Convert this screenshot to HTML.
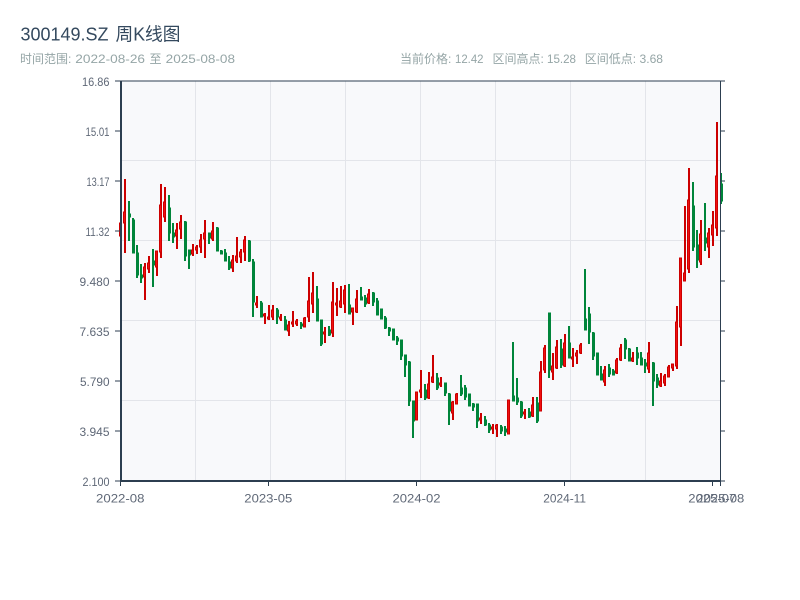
<!DOCTYPE html>
<html><head><meta charset="utf-8"><style>
html,body{margin:0;padding:0;background:#fff}
svg{display:block}
text{font-family:"Liberation Sans","WenQuanYi Zen Hei",sans-serif}
.cjk{font-family:"WenQuanYi Zen Hei","Liberation Sans",sans-serif}
.gr rect{fill:#00853a;stroke:#00853a;stroke-width:1;width:2px}
.rd rect{fill:#f01010;stroke:#cc0000;stroke-width:1;width:2px}
.yl text{font-size:12px;fill:#5f6877}
.xl text{font-size:12px;fill:#5f6877}
.sub text{font-size:12px;fill:#95a5a6}
</style></head><body>
<svg width="800" height="600" viewBox="0 0 800 600" xmlns="http://www.w3.org/2000/svg">
<rect x="120" y="81" width="600" height="400" fill="#f8f9fb"/>
<path d="M120 160.5H720M120 240.5H720M120 320.5H720M120 400.5H720M195.5 81V481M270.5 81V481M345.5 81V481M420.5 81V481M495.5 81V481M570.5 81V481M645.5 81V481" stroke="#e3e5ea" stroke-width="1" fill="none"/>

<path fill="none" stroke="#cc0000" stroke-width="2" d="M121 223V236M125 179V253M145 263V300M149 256V273M157 251V276M161 184V258M165 187V222M177 223V249M181 215V239M193 244V256M197 245V254M201 234V253M205 220V258M213 222V241M233 255V272M237 237V263M241 249V263M245 236V261M257 296V308M265 313V324M269 305V320M273 305V320M281 314V321M289 321V336M293 311V327M297 319V326M305 317V327M309 277V322M313 272V313M325 327V343M333 282V337M337 288V316M341 286V308M345 285V313M353 308V325M357 290V313M369 289V304M417 392V420M421 370V398M429 372V399M433 355V383M441 377V387M453 401V420M457 393V404M481 413V424M493 424V434M497 424V437M509 400V434M525 409V419M533 397V417M541 361V411M545 345V373M553 353V380M557 340V369M565 334V367M573 348V367M577 350V364M581 343V354M605 366V386M617 358V374M621 344V361M633 352V362M649 342V373M661 373V387M665 374V386M669 365V377M673 364V371M677 306V369M681 258V346M685 206V281M689 168V273M701 220V265M709 228V258M713 211V246M717 122V236"/>
<path fill="none" stroke="#00853a" stroke-width="2" d="M129 201V241M133 218V253M137 245V278M141 264V283M153 249V287M169 195V241M173 223V243M185 221V261M189 250V269M209 233V244M217 227V251M221 250V254M225 249V261M229 256V270M249 240V262M253 259V317M261 301V317M277 308V324M285 316V330M301 322V329M317 286V321M321 320V346M329 326V336M349 284V314M361 287V300M365 295V307M373 292V306M377 298V315M381 309V319M385 316V329M389 327V336M393 329V340M397 336V345M401 340V360M405 355V377M409 361V406M413 401V438M425 384V400M437 373V390M445 383V396M449 393V425M461 375V396M465 385V400M469 394V406M473 403V411M477 404V428M485 416V426M489 423V433M501 425V434M505 426V436M513 342V401M517 378V405M521 401V418M529 408V418M537 397V423M549 313V378M561 339V368M569 326V358M585 269V330M589 307V344M593 332V360M597 353V375M601 366V380M609 364V377M613 369V375M625 338V359M629 348V361M637 347V365M641 352V365M645 359V373M653 362V406M657 374V388M693 182V251M697 230V268M705 203V251M721 173V204"/>

<g class="gr">
<rect x="128.5" y="214" height="3"/><rect x="132.5" y="220" height="33"/><rect x="136.5" y="253" height="22"/><rect x="140.5" y="275" height="3"/><rect x="152.5" y="261" height="4"/><rect x="168.5" y="208" height="25"/><rect x="172.5" y="233" height="4"/><rect x="184.5" y="222" height="34"/><rect x="188.5" y="250" height="5"/><rect x="208.5" y="233" height="5"/><rect x="216.5" y="228" height="23"/><rect x="220.5" y="251" height="3"/><rect x="224.5" y="253" height="8"/><rect x="228.5" y="262" height="6"/><rect x="248.5" y="241" height="20"/><rect x="252.5" y="262" height="40"/><rect x="260.5" y="303" height="14"/><rect x="276.5" y="310" height="7"/><rect x="284.5" y="320" height="10"/><rect x="300.5" y="324" height="2"/><rect x="316.5" y="299" height="22"/><rect x="320.5" y="320" height="24"/><rect x="328.5" y="330" height="5"/><rect x="348.5" y="305" height="9"/><rect x="360.5" y="297" height="3"/><rect x="364.5" y="298" height="6"/><rect x="372.5" y="293" height="9"/><rect x="376.5" y="301" height="14"/><rect x="380.5" y="309" height="10"/><rect x="384.5" y="318" height="10"/><rect x="388.5" y="328" height="3"/><rect x="392.5" y="329" height="11"/><rect x="396.5" y="338" height="3"/><rect x="400.5" y="340" height="16"/><rect x="404.5" y="355" height="10"/><rect x="408.5" y="362" height="39"/><rect x="412.5" y="401" height="20"/><rect x="424.5" y="390" height="8"/><rect x="436.5" y="378" height="10"/><rect x="444.5" y="383" height="10"/><rect x="448.5" y="394" height="17"/><rect x="460.5" y="388" height="6"/><rect x="464.5" y="388" height="9"/><rect x="468.5" y="394" height="12"/><rect x="472.5" y="404" height="3"/><rect x="476.5" y="404" height="17"/><rect x="484.5" y="420" height="5"/><rect x="488.5" y="425" height="5"/><rect x="500.5" y="427" height="4"/><rect x="504.5" y="429" height="3"/><rect x="512.5" y="396" height="5"/><rect x="516.5" y="398" height="4"/><rect x="520.5" y="402" height="14"/><rect x="528.5" y="412" height="5"/><rect x="536.5" y="403" height="18"/><rect x="548.5" y="313" height="57"/><rect x="560.5" y="349" height="16"/><rect x="568.5" y="343" height="15"/><rect x="584.5" y="319" height="11"/><rect x="588.5" y="314" height="18"/><rect x="592.5" y="333" height="23"/><rect x="596.5" y="353" height="22"/><rect x="600.5" y="374" height="6"/><rect x="608.5" y="368" height="6"/><rect x="612.5" y="371" height="4"/><rect x="624.5" y="340" height="9"/><rect x="628.5" y="349" height="12"/><rect x="636.5" y="353" height="5"/><rect x="640.5" y="358" height="7"/><rect x="644.5" y="363" height="3"/><rect x="652.5" y="363" height="18"/><rect x="656.5" y="378" height="7"/><rect x="692.5" y="206" height="41"/><rect x="696.5" y="245" height="15"/><rect x="704.5" y="238" height="5"/><rect x="720.5" y="184" height="17"/>
</g>
<g class="rd">
<rect x="119.5" y="223" height="13"/><rect x="123.5" y="212" height="11"/><rect x="143.5" y="267" height="10"/><rect x="147.5" y="263" height="6"/><rect x="155.5" y="251" height="16"/><rect x="159.5" y="205" height="47"/><rect x="163.5" y="202" height="15"/><rect x="175.5" y="230" height="6"/><rect x="179.5" y="222" height="7"/><rect x="191.5" y="250" height="4"/><rect x="195.5" y="247" height="3"/><rect x="199.5" y="240" height="7"/><rect x="203.5" y="233" height="6"/><rect x="211.5" y="231" height="8"/><rect x="231.5" y="260" height="8"/><rect x="235.5" y="256" height="5"/><rect x="239.5" y="252" height="5"/><rect x="243.5" y="240" height="12"/><rect x="255.5" y="303" height="2"/><rect x="263.5" y="314" height="2"/><rect x="267.5" y="317" height="2"/><rect x="271.5" y="310" height="7"/><rect x="279.5" y="317" height="2"/><rect x="287.5" y="325" height="6"/><rect x="291.5" y="322" height="2"/><rect x="295.5" y="321" height="3"/><rect x="303.5" y="318" height="9"/><rect x="307.5" y="301" height="16"/><rect x="311.5" y="293" height="11"/><rect x="323.5" y="332" height="2"/><rect x="331.5" y="302" height="31"/><rect x="335.5" y="303" height="2"/><rect x="339.5" y="301" height="6"/><rect x="343.5" y="290" height="14"/><rect x="351.5" y="308" height="4"/><rect x="355.5" y="299" height="13"/><rect x="367.5" y="294" height="9"/><rect x="415.5" y="392" height="28"/><rect x="419.5" y="390" height="2"/><rect x="427.5" y="384" height="14"/><rect x="431.5" y="377" height="5"/><rect x="439.5" y="383" height="2"/><rect x="451.5" y="402" height="11"/><rect x="455.5" y="394" height="10"/><rect x="479.5" y="418" height="2"/><rect x="491.5" y="427" height="2"/><rect x="495.5" y="425" height="4"/><rect x="507.5" y="400" height="34"/><rect x="523.5" y="412" height="2"/><rect x="531.5" y="405" height="11"/><rect x="539.5" y="372" height="39"/><rect x="543.5" y="348" height="22"/><rect x="551.5" y="366" height="6"/><rect x="555.5" y="347" height="21"/><rect x="563.5" y="343" height="23"/><rect x="571.5" y="357" height="2"/><rect x="575.5" y="353" height="3"/><rect x="579.5" y="345" height="8"/><rect x="603.5" y="370" height="12"/><rect x="615.5" y="360" height="13"/><rect x="619.5" y="348" height="12"/><rect x="631.5" y="358" height="3"/><rect x="647.5" y="353" height="16"/><rect x="659.5" y="381" height="5"/><rect x="663.5" y="376" height="7"/><rect x="667.5" y="367" height="10"/><rect x="671.5" y="364" height="4"/><rect x="675.5" y="322" height="44"/><rect x="679.5" y="258" height="69"/><rect x="683.5" y="273" height="8"/><rect x="687.5" y="200" height="69"/><rect x="699.5" y="234" height="28"/><rect x="707.5" y="233" height="14"/><rect x="711.5" y="225" height="10"/><rect x="715.5" y="176" height="52"/>
</g>

<path fill="none" stroke="#2c3e50" stroke-width="1" d="M115 81H725M115 131H120M115 181H120M115 231H120M115 281H120M115 331H120M115 381H120M115 431H120M720.500 81V481M720 131H725M720 181H725M720 231H725M720 281H725M720 331H725M720 381H725M720 431H725M115 481H120M720 481H725M120.500 481V486M268.500 481V486M416.500 481V486M564.500 481V486M712.500 481V486M720.500 481V486"/>
<path fill="none" stroke="#2c3e50" stroke-width="2" d="M121 81V482M120 481H721"/>

<g class="yl">
<text x="82" y="86" textLength="27.500" lengthAdjust="spacingAndGlyphs">16.86</text>
<text x="85.500" y="136" textLength="24" lengthAdjust="spacingAndGlyphs">15.01</text>
<text x="86.500" y="186" textLength="23" lengthAdjust="spacingAndGlyphs">13.17</text>
<text x="85.500" y="236" textLength="24" lengthAdjust="spacingAndGlyphs">11.32</text>
<text x="79.500" y="286" textLength="30" lengthAdjust="spacingAndGlyphs">9.480</text>
<text x="79.500" y="336" textLength="30" lengthAdjust="spacingAndGlyphs">7.635</text>
<text x="80" y="386" textLength="29.500" lengthAdjust="spacingAndGlyphs">5.790</text>
<text x="79.500" y="436" textLength="30" lengthAdjust="spacingAndGlyphs">3.945</text>
<text x="82.500" y="486" textLength="27" lengthAdjust="spacingAndGlyphs">2.100</text>
</g>
<g class="xl">
<text x="96" y="502.500" textLength="48.500" lengthAdjust="spacingAndGlyphs">2022-08</text>
<text x="244.300" y="502.500" textLength="48" lengthAdjust="spacingAndGlyphs">2023-05</text>
<text x="392.500" y="502.500" textLength="48" lengthAdjust="spacingAndGlyphs">2024-02</text>
<text x="543.300" y="502.500" textLength="42.700" lengthAdjust="spacingAndGlyphs">2024-11</text>
<text x="688.300" y="502.500" textLength="48" lengthAdjust="spacingAndGlyphs">2025-07</text>
<text x="696.300" y="502.500" textLength="48" lengthAdjust="spacingAndGlyphs">2025-08</text>
</g>

<text x="20.500" y="40.500" font-size="18" fill="#34495e" textLength="88" lengthAdjust="spacingAndGlyphs">300149.SZ</text>
<text class="cjk" x="115.500" y="40.500" font-size="18" fill="#34495e" textLength="65" lengthAdjust="spacingAndGlyphs">周K线图</text>

<g class="sub">
<text class="cjk" x="20" y="63">时间范围:</text>
<text x="75.300" y="63" textLength="69.700" lengthAdjust="spacingAndGlyphs">2022-08-26</text>
<text class="cjk" x="149.500" y="63">至</text>
<text x="165.700" y="63" textLength="69.300" lengthAdjust="spacingAndGlyphs">2025-08-08</text>
<text class="cjk" x="400" y="63">当前价格:</text>
<text x="455" y="63" textLength="28.500" lengthAdjust="spacingAndGlyphs">12.42</text>
<text class="cjk" x="492.500" y="63">区间高点:</text>
<text x="547" y="63" textLength="29" lengthAdjust="spacingAndGlyphs">15.28</text>
<text class="cjk" x="584.700" y="63">区间低点:</text>
<text x="639.500" y="63" textLength="23.500" lengthAdjust="spacingAndGlyphs">3.68</text>
</g>
</svg>
</body></html>
